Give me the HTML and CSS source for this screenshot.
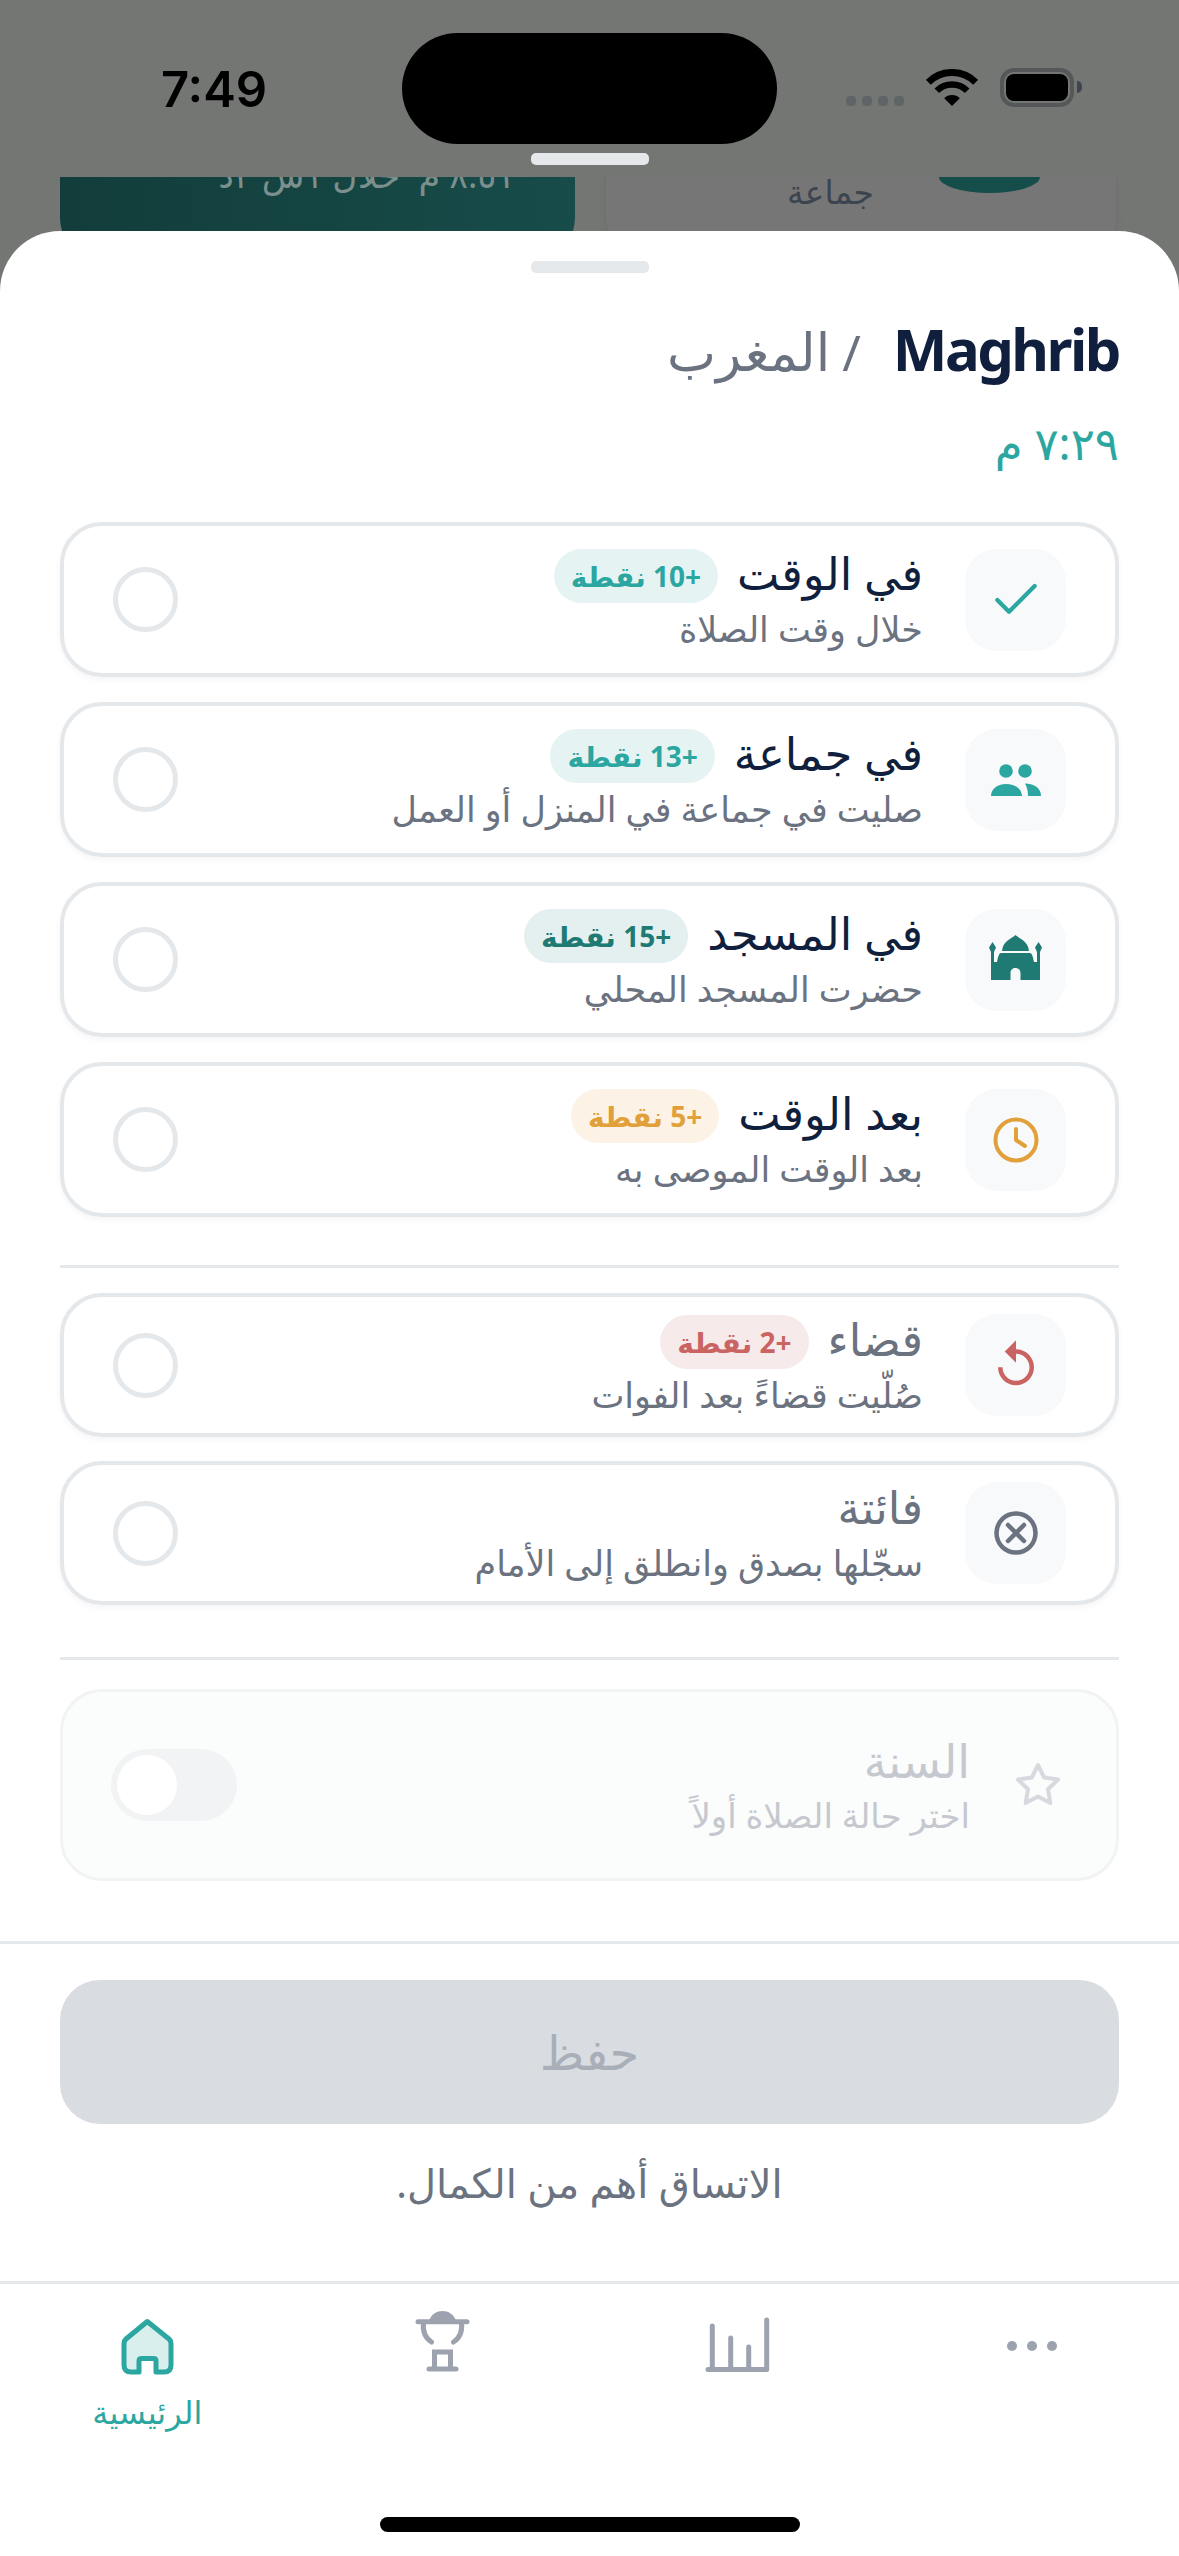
FILE: index.html
```html
<!doctype html>
<html lang="ar" dir="rtl">

<head>
    <meta charset="utf-8">
    <title>Prayer log</title>
    <link rel="stylesheet" href="styles.css">
</head>

<body>
    <div id="screen">
        <div id="backdrop">
            <div class="status">
                <div class="status-left">7:49</div>
                <div class="island"></div>
                <div class="status-right">
                    <div class="signal"><i></i><i></i><i></i><i></i></div>
                    <svg class="wifi" viewBox="0 0 52 38" width="52" height="38">
                        <path d="M2.3 13.3A33.5 33.5 0 0 1 49.7 13.3" fill="none" stroke="#000" stroke-width="7" />
                        <path d="M10.8 21.8A21.5 21.5 0 0 1 41.2 21.8" fill="none" stroke="#000" stroke-width="6.5" />
                        <path d="M26 37 18.2 29.2A11 11 0 0 1 33.8 29.2z" fill="#000" />
                    </svg>
                    <div class="battery"><div class="battery-fill"></div></div>
                    <div class="battery-nub"></div>
                </div>
            </div>
            <div class="grabber grabber-top"></div>
            <div class="peek">
                <div class="peek-card peek-plain">
                    <div class="peek-dot"></div>
                    <div class="peek-label">جماعة</div>
                </div>
                <div class="peek-card peek-teal">
                    <div class="peek-time">٨:٥١ م &nbsp;خلال ١س ٢د</div>
                </div>
            </div>
        </div>

        <div id="sheet">
            <div class="grabber grabber-sheet"></div>

            <div class="main">
                <div class="head">
                    <span class="head-en" dir="ltr">Maghrib</span>
                    <span class="head-sep">/</span>
                    <span class="head-ar">المغرب</span>
                </div>
                <div class="head-time">٧:٢٩ م</div>

                <div class="options">
                    <div class="opt">
                        <div class="opt-icon">
                            <svg viewBox="0 0 24 24" width="56" height="56" fill="none" stroke="#2ca6a0" stroke-width="1.800" stroke-linecap="round" stroke-linejoin="round">
                                <path d="M20 6 9 17l-5-5" />
                            </svg>
                        </div>
                        <div class="opt-text">
                            <div class="opt-top">
                                <span class="opt-title">في الوقت</span>
                                <span class="badge badge-teal">+10 نقطة</span>
                            </div>
                            <div class="opt-sub">خلال وقت الصلاة</div>
                        </div>
                        <div class="radio"></div>
                    </div>

                    <div class="opt">
                        <div class="opt-icon">
                            <svg viewBox="0 0 56 56" width="56" height="56" fill="#2ca6a0">
                                <circle cx="18" cy="19" r="6.800" />
                                <circle cx="37" cy="19" r="6.800" />
                                <path d="M3 44c0-7 6-12 15-12s16 5 16 12z" />
                                <path d="M37 31.500c8 0 16 4 16 12.500H40c0-5-1-9-3-12.500z" />
                            </svg>
                        </div>
                        <div class="opt-text">
                            <div class="opt-top">
                                <span class="opt-title">في جماعة</span>
                                <span class="badge badge-teal">+13 نقطة</span>
                            </div>
                            <div class="opt-sub">صليت في جماعة في المنزل أو العمل</div>
                        </div>
                        <div class="radio"></div>
                    </div>

                    <div class="opt">
                        <div class="opt-icon">
                            <svg viewBox="0 0 56 56" width="56" height="56" fill="#1f7a73">
                                <path d="M27.500 3C23 7 15 9 14 19H41C40 9 32 7 27.500 3z" />
                                <path fill-rule="evenodd" d="M4.500 10 1 15.500 3 20V48H52V20L54 15.500 50.500 10 47 15.500 49 20V30H46C45 25 44 21 42 21H13C11 21 10 25 9 30H6V20L8 15.500zM22.500 48V41C22.500 38 24.500 36 27.500 36S32.500 38 32.500 41V48z" />
                            </svg>
                        </div>
                        <div class="opt-text">
                            <div class="opt-top">
                                <span class="opt-title">في المسجد</span>
                                <span class="badge badge-green">+15 نقطة</span>
                            </div>
                            <div class="opt-sub">حضرت المسجد المحلي</div>
                        </div>
                        <div class="radio"></div>
                    </div>

                    <div class="opt">
                        <div class="opt-icon">
                            <svg viewBox="0 0 48 48" width="48" height="48" fill="none" stroke="#e2a03a" stroke-width="4" stroke-linecap="round" stroke-linejoin="round">
                                <circle cx="24" cy="24" r="20.500" />
                                <path d="M24 13V24L33 30" />
                            </svg>
                        </div>
                        <div class="opt-text">
                            <div class="opt-top">
                                <span class="opt-title">بعد الوقت</span>
                                <span class="badge badge-amber">+5 نقطة</span>
                            </div>
                            <div class="opt-sub">بعد الوقت الموصى به</div>
                        </div>
                        <div class="radio"></div>
                    </div>
                </div>

                <div class="rule rule-a"></div>

                <div class="options options-sm">
                    <div class="opt">
                        <div class="opt-icon">
                            <svg viewBox="0 0 24 24" width="54" height="54" fill="#c96463">
                                <path d="M12 5V1L7 6l5 5V7c3.310 0 6 2.690 6 6s-2.690 6-6 6-6-2.690-6-6H4c0 4.420 3.580 8 8 8s8-3.580 8-8-3.580-8-8-8z" />
                            </svg>
                        </div>
                        <div class="opt-text">
                            <div class="opt-top">
                                <span class="opt-title opt-muted">قضاء</span>
                                <span class="badge badge-red">+2 نقطة</span>
                            </div>
                            <div class="opt-sub">صُلّيت قضاءً بعد الفوات</div>
                        </div>
                        <div class="radio"></div>
                    </div>

                    <div class="opt">
                        <div class="opt-icon">
                            <svg viewBox="0 0 48 48" width="48" height="48" fill="none" stroke="#6b7280" stroke-width="4.500" stroke-linecap="round">
                                <circle cx="24" cy="24" r="19.500" />
                                <path d="M16 16 32 32M32 16 16 32" />
                            </svg>
                        </div>
                        <div class="opt-text">
                            <div class="opt-top">
                                <span class="opt-title opt-muted">فائتة</span>
                            </div>
                            <div class="opt-sub">سجّلها بصدق وانطلق إلى الأمام</div>
                        </div>
                        <div class="radio"></div>
                    </div>
                </div>

                <div class="rule rule-b"></div>

                <div class="sunnah">
                    <svg class="sunnah-star" viewBox="0 0 24 24" width="48" height="48" fill="none" stroke="#d6d9de" stroke-width="2" stroke-linejoin="round">
                        <path d="M12 2l3.090 6.260L22 9.270l-5 4.870 1.180 6.880L12 17.770l-6.180 3.250L7 14.140 2 9.270l6.910-1.010L12 2z" />
                    </svg>
                    <div class="opt-text">
                        <div class="sunnah-title">السنة</div>
                        <div class="sunnah-sub">اختر حالة الصلاة أولاً</div>
                    </div>
                    <div class="toggle"><div class="toggle-knob"></div></div>
                </div>
            </div>

            <div class="save-area">
                <div class="save-btn">حفظ</div>
                <div class="save-note">الاتساق أهم من الكمال.</div>
            </div>

            <div class="tabs">
                <div class="tab-row" dir="ltr">
                    <div class="tab tab-on">
                        <svg viewBox="-6 -8 72 72" width="72" height="72" fill="#d9efed" stroke="#2ca6a0" stroke-width="5" stroke-linejoin="round">
                            <path d="M30.300 5.500 9 23C7.500 24.300 7 25.500 7 27.500V49C7 53.500 9.500 56 14 56H22V45C22 43.500 23 42.500 24.500 42.500H36.500C38 42.500 39 43.500 39 45V56H47C51.500 56 54 53.500 54 49V27.500C54 25.500 53.500 24.300 52 23z" />
                        </svg>
                        <div class="tab-label">الرئيسية</div>
                    </div>
                    <div class="tab">
                        <svg viewBox="-9 0 72 72" width="72" height="72" fill="none" stroke="#9ca3af" stroke-width="5" stroke-linecap="round">
                            <path d="M3 13.700H52" />
                            <path d="M14 13C16 6 22 3 27.500 3S39 6 41 13z" fill="#9ca3af" stroke="none" />
                            <path d="M8.500 15C7.500 23 10.500 30 16.500 34M46.500 15C47.500 23 44.500 30 38.500 34" />
                            <path d="M19.500 61V44H35.500V61M14 61H41" />
                        </svg>
                    </div>
                    <div class="tab">
                        <svg viewBox="-3 -8 72 72" width="72" height="72" fill="none" stroke="#9ca3af" stroke-width="5" stroke-linecap="round" stroke-linejoin="round">
                            <path d="M8.300 10V53.500M26.700 22V53.500M44.700 31V53.500M62.700 4V53.500H4" />
                        </svg>
                    </div>
                    <div class="tab">
                        <svg viewBox="0 0 72 72" width="72" height="72" fill="#9ca3af">
                            <circle cx="16" cy="38" r="5" />
                            <circle cx="36" cy="38" r="5" />
                            <circle cx="56" cy="38" r="5" />
                        </svg>
                    </div>
                </div>
                <div class="home-bar"></div>
            </div>
        </div>
    </div>
</body>

</html>
```

FILE: styles.css
```css
* {
    box-sizing: border-box;
}

html, body {
    margin: 0;
    padding: 0;
}

body {
    font-family: "Noto Sans", "DejaVu Sans", sans-serif;
    background-color: #747674;
}

#screen {
    width: 1179px;
    height: 2556px;
    overflow: hidden;
    display: flex;
    flex-direction: column;
}

/* dimmed page behind the sheet */
#backdrop {
    height: 231px;
    flex: none;
}

.status {
    direction: ltr;
    display: flex;
    align-items: flex-start;
    padding-top: 33px;
    height: 153px;
}

.status-left {
    width: 402px;
    padding-left: 161px;
    margin-top: 28px;
    font-family: Inter, sans-serif;
    font-size: 49px;
    font-weight: 600;
    line-height: 58px;
    color: #000;
}

.island {
    width: 375px;
    height: 111px;
    border-radius: 56px;
    background-color: #000;
}

.status-right {
    flex: 1;
    display: flex;
    align-items: flex-end;
    height: 39px;
    margin-top: 35px;
    padding-left: 69px;
}

.signal {
    display: flex;
    gap: 6px;
    margin-right: 22px;
    margin-bottom: 1px;
}

.signal i {
    width: 10px;
    height: 10px;
    border-radius: 4px;
    background-color: #5f6466;
}

.wifi {
    margin-right: 22px;
}

.battery {
    width: 74px;
    height: 39px;
    padding: 2px;
    border: 4px solid #555858;
    border-radius: 14px;
}

.battery-fill {
    height: 100%;
    border-radius: 8px;
    background-color: #000;
}

.battery-nub {
    width: 5px;
    height: 12px;
    margin-left: 3px;
    margin-bottom: 14px;
    border-radius: 0 6px 6px 0;
    background-color: #3e4450;
}

.grabber {
    width: 118px;
    height: 12px;
    margin: 0 auto;
    border-radius: 5px;
    background-color: #e5e8eb;
}

.peek {
    display: flex;
    justify-content: space-between;
    height: 54px;
    margin-top: 12px;
    padding: 0 63px 0 60px;
    overflow: hidden;
}

.peek-card {
    height: 90px;
    border-radius: 0 0 50px 50px;
}

.peek-plain {
    display: flex;
    width: 510px;
    padding-right: 76px;
    background-color: #767676;
    box-shadow: 0 0 6px #6a6e6e;
}

.peek-dot {
    flex: none;
    width: 101px;
    height: 16px;
    border-radius: 0 0 50% 50% / 0 0 100% 100%;
    background-color: #154d4a;
}

.peek-label {
    margin-right: 65px;
    font-size: 33px;
    line-height: 30px;
    color: #3c4450;
}

.peek-teal {
    width: 515px;
    padding-right: 60px;
    background: linear-gradient(90deg, #123d3a, #174c4a);
}

.peek-time {
    margin-top: -22px;
    font-size: 35px;
    line-height: 40px;
    color: #7c8f8d;
    white-space: nowrap;
}

/* sheet */
#sheet {
    flex: 1;
    display: flex;
    flex-direction: column;
    background-color: #fff;
    border-radius: 60px 60px 0 0;
}

.grabber-sheet {
    margin-top: 30px;
    flex: none;
}

.main {
    padding: 0 60px;
}

.head {
    display: flex;
    align-items: baseline;
    height: 64px;
    margin-top: 44px;
    line-height: 64px;
}

.head-en {
    font-size: 58px;
    font-weight: 700;
    color: #0f1f3d;
    letter-spacing: -2.5px;
}

.head-sep {
    margin: 0 32px 0 12px;
    font-size: 50px;
    color: #6b7280;
}

.head-ar {
    font-size: 52px;
    color: #6b7280;
}

.head-time {
    height: 56px;
    margin-top: 34px;
    font-size: 45px;
    line-height: 56px;
    color: #2ca6a0;
}

.options {
    display: flex;
    flex-direction: column;
    gap: 25px;
    margin-top: 51px;
}

.opt {
    display: flex;
    align-items: center;
    height: 155px;
    padding: 0 49px;
    background-color: #fff;
    border: 4px solid #e5e8eb;
    border-radius: 42px;
    box-shadow: 0 3px 6px rgba(17, 24, 39, 0.04);
}

.options-sm {
    gap: 24px;
    margin-top: 25px;
}

.options-sm .opt {
    height: 144px;
}

.opt-icon {
    flex: none;
    display: flex;
    align-items: center;
    justify-content: center;
    width: 101px;
    height: 102px;
    margin-left: 42px;
    border-radius: 32px;
    background-color: #f8f9fb;
}

.opt-text {
    flex: 1;
}

.opt-top {
    display: flex;
    align-items: center;
    gap: 19px;
    height: 54px;
}

.opt-title {
    margin-bottom: 6px;
    font-size: 45px;
    line-height: 54px;
    color: #0f1f3d;
}

.opt-muted {
    color: #6b7280;
}

.opt-sub {
    margin-top: 5px;
    font-size: 35px;
    line-height: 42px;
    color: #6b7280;
}

.badge {
    padding: 0 17px;
    height: 54px;
    border-radius: 27px;
    font-size: 28px;
    font-weight: 700;
    line-height: 54px;
}

.badge-teal {
    background-color: #e5f4f3;
    color: #2ca6a0;
}

.badge-green {
    background-color: #e3f0ef;
    color: #1f7a73;
}

.badge-amber {
    background-color: #fcf3e6;
    color: #e2a03a;
}

.badge-red {
    background-color: #f7eaea;
    color: #c96463;
}

.radio {
    flex: none;
    width: 65px;
    height: 65px;
    border: 5px solid #e5e8eb;
    border-radius: 50%;
}

.rule {
    height: 3px;
    background-color: #e5e8eb;
}

.rule-a {
    margin-top: 48px;
}

.rule-b {
    margin-top: 52px;
}

.sunnah {
    display: flex;
    align-items: center;
    height: 192px;
    margin-top: 29px;
    padding: 0 54px 0 48px;
    background-color: #fbfcfc;
    border: 3px solid #f2f3f5;
    border-radius: 42px;
}

.sunnah-star {
    flex: none;
    margin-left: 44px;
}

.sunnah-title {
    font-size: 46px;
    line-height: 50px;
    color: #c5c8ce;
}

.sunnah-sub {
    margin-top: 10px;
    font-size: 34px;
    line-height: 40px;
    color: #c5c8ce;
}

.toggle {
    flex: none;
    width: 126px;
    height: 72px;
    padding: 6px;
    border-radius: 36px;
    background-color: #f2f3f5;
}

.toggle-knob {
    width: 60px;
    height: 60px;
    margin-right: 54px;
    border-radius: 50%;
    background-color: #fff;
}

.save-area {
    margin-top: 60px;
    padding: 36px 60px 0;
    border-top: 3px solid #e5e8eb;
}

.save-btn {
    height: 144px;
    border-radius: 40px;
    background-color: #d9dde1;
    text-align: center;
    font-size: 48px;
    line-height: 144px;
    color: #a9afb8;
}

.save-note {
    margin-top: 36px;
    text-align: center;
    font-size: 40px;
    line-height: 46px;
    color: #6b7280;
}

.tabs {
    flex: 1;
    display: flex;
    flex-direction: column;
    margin-top: 75px;
    border-top: 3px solid #e5e8eb;
}

.tab-row {
    display: grid;
    grid-template-columns: repeat(4, 1fr);
    padding-top: 24px;
}

.tab {
    display: flex;
    flex-direction: column;
    align-items: center;
}

.tab-label {
    direction: rtl;
    margin-top: 12px;
    font-size: 32px;
    line-height: 40px;
    color: #2ca6a0;
}

.home-bar {
    width: 420px;
    height: 15px;
    margin: auto auto 24px;
    border-radius: 8px;
    background-color: #000;
}
```
